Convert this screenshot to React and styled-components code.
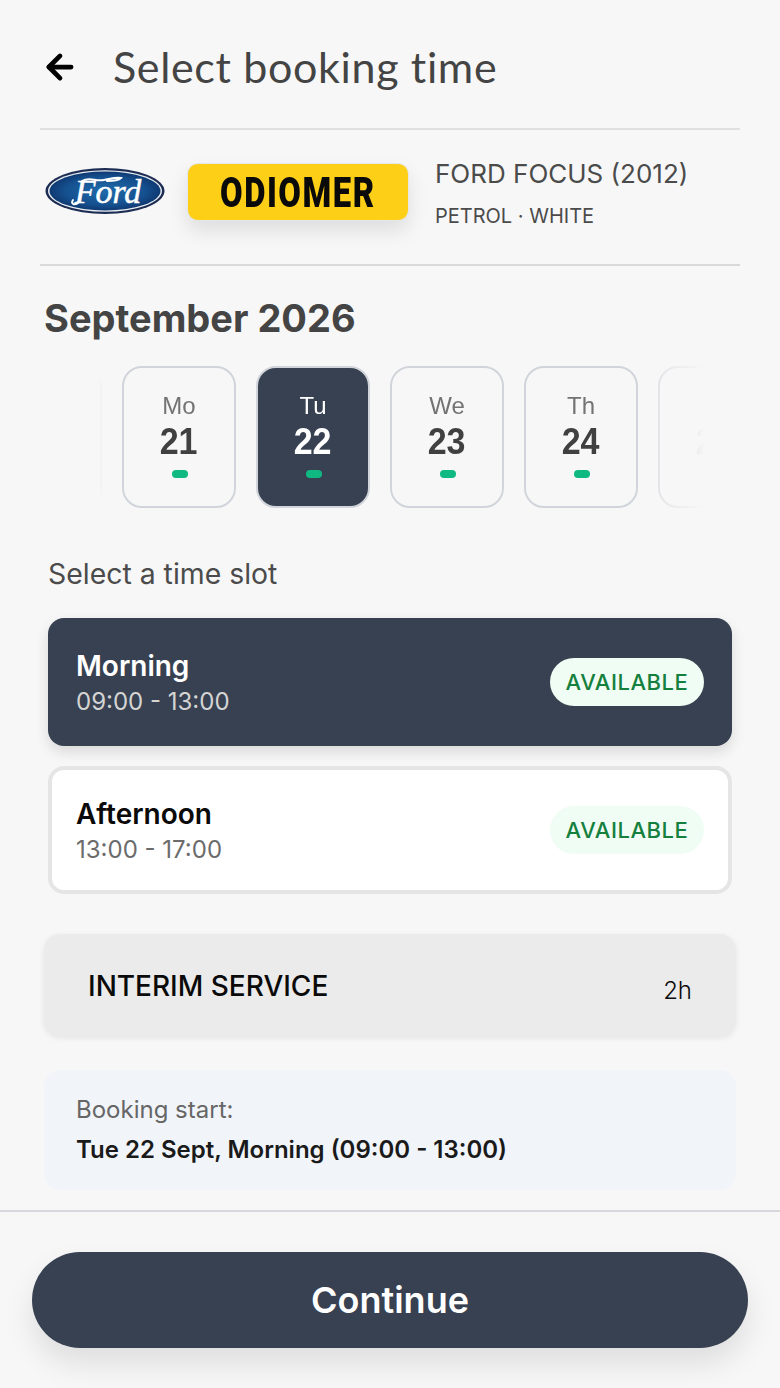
import React from 'react';
import styled, { createGlobalStyle } from 'styled-components';
import { ArrowLeft } from 'lucide-react';

const GlobalStyle = createGlobalStyle`
    * { box-sizing: border-box; }
    html, body {
        margin: 0;
        background: #f7f7f7;
    }
    body {
        font-family: Inter, "Liberation Sans", sans-serif;
        color: #444;
    }
`;

const Page = styled.div`
    width: 780px;
    height: 1388px;
    overflow: hidden;
    display: flex;
    flex-direction: column;
`;

const Header = styled.header`
    height: 130px;
    margin: 0 40px;
    padding: 6px 0 0 4px;
    display: flex;
    align-items: center;
    gap: 37px;
    border-bottom: 2px solid #e0e0e0;
`;

const BackButton = styled.button`
    width: 32px;
    height: 32px;
    padding: 0;
    border: 0;
    background: none;
    color: #000;
    display: flex;
    align-items: center;
    justify-content: center;

    svg {
        flex-shrink: 0;
    }
`;

const Title = styled.h1`
    margin: -2px 0 0;
    font-family: Lato, sans-serif;
    font-size: 43px;
    font-weight: 400;
    letter-spacing: 0.65px;
    color: #444;
`;

const Vehicle = styled.section`
    height: 136px;
    margin: 0 40px;
    padding: 0 0 12px 5px;
    display: flex;
    align-items: center;
    border-bottom: 2px solid #d9d9d9;
`;

const Plate = styled.div`
    flex: 0 0 222px;
    height: 58px;
    margin: 2px 0 0 22px;
    border: 1px solid #e5e7eb;
    border-radius: 11px;
    background: #fdcf17;
    box-shadow: 0 10px 20px rgba(0, 0, 0, 0.1);
    display: flex;
    align-items: center;
    justify-content: center;
`;

const PlateText = styled.span`
    display: inline-block;
    transform: scaleX(0.78);
    font-family: Roboto, sans-serif;
    font-size: 42px;
    font-weight: 900;
    letter-spacing: 2px;
    color: #0a0a0a;
`;

const VehicleInfo = styled.div`
    margin: 4px 0 0 26px;
    display: flex;
    flex-direction: column;
    gap: 15px;
    white-space: nowrap;
`;

const VehicleName = styled.div`
    font-size: 26px;
    color: #4b4b4b;
`;

const VehicleMeta = styled.div`
    font-size: 20px;
    color: #4b4b4b;
`;

const Month = styled.h2`
    margin: 29px 0 0 44px;
    font-size: 38px;
    line-height: 46px;
    font-weight: 700;
    color: #444;
`;

const DateScroller = styled.div`
    width: 692px;
    margin: 25px 0 0 44px;
    overflow: hidden;
    mask-image: linear-gradient(
        90deg,
        transparent 55px,
        #000 78px,
        #000 596px,
        rgba(0, 0, 0, 0.5) 616px,
        rgba(0, 0, 0, 0.08) 650px,
        transparent 660px
    );
`;

const DateTrack = styled.div`
    display: flex;
    gap: 20px;
    margin-left: -56px;
`;

const DateCard = styled.div`
    flex: 0 0 114px;
    height: 142px;
    padding-top: 24px;
    border: 2px solid #d1d5db;
    border-radius: 20px;
    background: ${props => (props.$active ? '#374151' : 'transparent')};
    display: flex;
    flex-direction: column;
    align-items: center;
`;

const DayName = styled.div`
    height: 28px;
    font-family: "Liberation Sans", sans-serif;
    font-size: 24px;
    line-height: 28px;
    color: ${props => (props.$active ? '#fff' : '#737373')};
`;

const DayNumber = styled.div`
    height: 44px;
    transform: scaleX(0.92);
    font-family: "Liberation Sans", sans-serif;
    font-size: 37px;
    line-height: 44px;
    font-weight: 700;
    color: ${props => (props.$active ? '#fff' : '#404040')};
`;

const DayDot = styled.div`
    width: 16px;
    height: 8px;
    margin: 6px 0 0 2px;
    border-radius: 4px;
    background: #10b981;
`;

const SlotLabel = styled.div`
    margin: 48px 0 0 48px;
    font-size: 28.4px;
    line-height: 36px;
    color: #4b4b4b;
`;

const SlotList = styled.div`
    margin: 26px 48px 0;
    display: flex;
    flex-direction: column;
    gap: 20px;
`;

const Slot = styled.div`
    height: 128px;
    border-radius: 16px;
    border: ${props => (props.$active ? '0' : '4px solid #e5e5e5')};
    padding-left: ${props => (props.$active ? '28px' : '24px')};
    padding-right: ${props => (props.$active ? '28px' : '24px')};
    background: ${props => (props.$active ? '#374151' : '#fff')};
    box-shadow: ${props => (props.$active ? '0 6px 14px rgba(0, 0, 0, 0.12)' : 'none')};
    display: flex;
    align-items: center;
    justify-content: space-between;
`;

const SlotText = styled.div`
    padding-top: 4px;
`;

const SlotName = styled.div`
    font-size: 28px;
    line-height: 36px;
    font-weight: 600;
    color: ${props => (props.$active ? '#fff' : '#0a0a0a')};
`;

const SlotTime = styled.div`
    font-size: 24px;
    line-height: 36px;
    color: ${props => (props.$active ? '#d4d4d4' : '#6b6b6b')};
`;

const Badge = styled.div`
    width: 154px;
    height: 48px;
    border-radius: 24px;
    background: #f0fdf4;
    display: flex;
    align-items: center;
    justify-content: center;
    font-size: 22px;
    font-weight: 500;
    letter-spacing: 0.55px;
    color: #15803d;
`;

const ServiceCard = styled.div`
    height: 102px;
    margin: 40px 44px 0;
    padding: 0 44px;
    border-radius: 16px;
    background: #ebebeb;
    box-shadow: 0 2px 6px rgba(0, 0, 0, 0.08);
    display: flex;
    align-items: center;
    justify-content: space-between;
`;

const ServiceName = styled.div`
    margin-top: 2px;
    font-size: 28px;
    font-weight: 500;
    color: #0a0a0a;
`;

const ServiceDuration = styled.div`
    margin-top: 10px;
    font-size: 24px;
    font-weight: 300;
    color: #0a0a0a;
`;

const Summary = styled.div`
    height: 120px;
    margin: 34px 44px 0;
    padding: 22px 32px 0;
    border-radius: 16px;
    background: #f1f5fa;
`;

const SummaryLabel = styled.div`
    font-size: 24px;
    line-height: 36px;
    color: #666;
`;

const SummaryValue = styled.div`
    margin-top: 4px;
    font-size: 24px;
    line-height: 36px;
    font-weight: 600;
    color: #1a1a1a;
`;

const Footer = styled.footer`
    margin-top: 20px;
    padding: 40px 32px 0;
    border-top: 2px solid #d6d8dd;
`;

const ContinueButton = styled.button`
    width: 100%;
    height: 96px;
    border: 0;
    border-radius: 48px;
    background: #374151;
    box-shadow: 0 16px 30px rgba(0, 0, 0, 0.1);
    font-family: Inter, sans-serif;
    font-size: 36px;
    font-weight: 600;
    color: #fff;
`;

const FordLogo = () => (
    <svg width="120" height="48" viewBox="0 0 120 48">
        <defs>
            <radialGradient id="fordBlue" cx="0.5" cy="0.5" r="0.6">
                <stop offset="0" stopColor="#1f6cab" />
                <stop offset="0.6" stopColor="#15508f" />
                <stop offset="1" stopColor="#0b2a5e" />
            </radialGradient>
        </defs>
        <ellipse cx="60" cy="24" rx="59.5" ry="23" fill="#1c2c52" />
        <ellipse cx="60" cy="24" rx="57" ry="20.8" fill="#e8edf3" />
        <ellipse cx="60" cy="24" rx="55.5" ry="19.4" fill="url(#fordBlue)" />
        <path
            d="M28 33c-3 4 2 6 6 2M37 14c8-5 13 1 22-1 6-1 12-3 17-2-3 3-9 3-14 3"
            fill="none"
            stroke="#fff"
            strokeWidth="2"
            strokeLinecap="round"
        />
        <text
            x="63"
            y="36"
            textAnchor="middle"
            fontFamily="'Liberation Serif', serif"
            fontStyle="italic"
            fontSize="34"
            stroke="#fff"
            strokeWidth="0.5"
            fill="#fff"
        >
            Ford
        </text>
    </svg>
);

const dates = [
    { id: 'hidden' },
    { id: 'mo', day: 'Mo', num: 21 },
    { id: 'tu', day: 'Tu', num: 22, active: true },
    { id: 'we', day: 'We', num: 23 },
    { id: 'th', day: 'Th', num: 24 },
    { id: 'fr', day: 'Fr', num: 25 },
];

const slots = [
    { name: 'Morning', time: '09:00 - 13:00', active: true },
    { name: 'Afternoon', time: '13:00 - 17:00' },
];

const App = () => (
    <Page>
        <GlobalStyle />
        <Header>
            <BackButton aria-label="Back">
                <ArrowLeft size={38} strokeWidth={3} />
            </BackButton>
            <Title>Select booking time</Title>
        </Header>

        <Vehicle>
            <FordLogo />
            <Plate>
                <PlateText>ODIOMER</PlateText>
            </Plate>
            <VehicleInfo>
                <VehicleName>FORD FOCUS (2012)</VehicleName>
                <VehicleMeta>PETROL · WHITE</VehicleMeta>
            </VehicleInfo>
        </Vehicle>

        <Month>September 2026</Month>

        <DateScroller>
            <DateTrack>
                {dates.map(date => (
                    <DateCard key={date.id} $active={date.active}>
                        <DayName $active={date.active}>{date.day}</DayName>
                        <DayNumber $active={date.active}>{date.num}</DayNumber>
                        <DayDot />
                    </DateCard>
                ))}
            </DateTrack>
        </DateScroller>

        <SlotLabel>Select a time slot</SlotLabel>

        <SlotList>
            {slots.map(slot => (
                <Slot key={slot.name} $active={slot.active}>
                    <SlotText>
                        <SlotName $active={slot.active}>{slot.name}</SlotName>
                        <SlotTime $active={slot.active}>{slot.time}</SlotTime>
                    </SlotText>
                    <Badge>AVAILABLE</Badge>
                </Slot>
            ))}
        </SlotList>

        <ServiceCard>
            <ServiceName>INTERIM SERVICE</ServiceName>
            <ServiceDuration>2h</ServiceDuration>
        </ServiceCard>

        <Summary>
            <SummaryLabel>Booking start:</SummaryLabel>
            <SummaryValue>Tue 22 Sept, Morning (09:00 - 13:00)</SummaryValue>
        </Summary>

        <Footer>
            <ContinueButton>Continue</ContinueButton>
        </Footer>
    </Page>
);

export default App;
